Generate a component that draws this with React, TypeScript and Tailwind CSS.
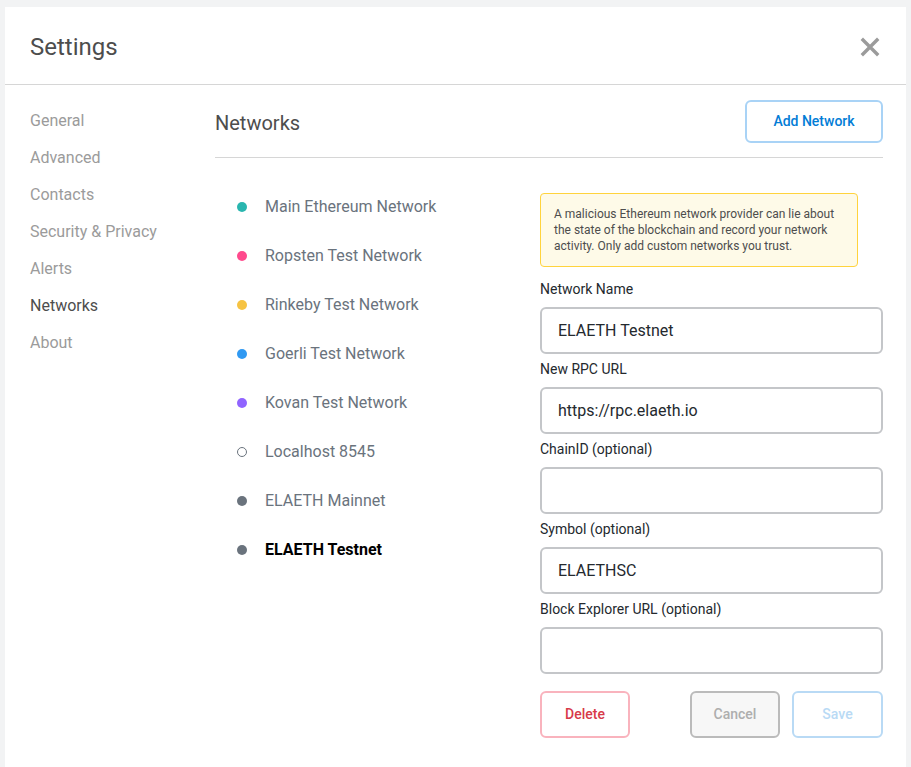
const networks = [
  { name: 'Main Ethereum Network', dot: 'bg-[#29b6af]' },
  { name: 'Ropsten Test Network', dot: 'bg-[#ff4a8d]' },
  { name: 'Rinkeby Test Network', dot: 'bg-[#f6c343]' },
  { name: 'Goerli Test Network', dot: 'bg-[#3099f2]' },
  { name: 'Kovan Test Network', dot: 'bg-[#9064ff]' },
  { name: 'Localhost 8545', dot: 'bg-white border border-[#6a737d]' },
  { name: 'ELAETH Mainnet', dot: 'bg-[#6a737d]' },
  { name: 'ELAETH Testnet', dot: 'bg-[#6a737d]', active: true },
];

const tabs = ['General', 'Advanced', 'Contacts', 'Security & Privacy', 'Alerts', 'Networks', 'About'];

const fields = [
  { label: 'Network Name', value: 'ELAETH Testnet' },
  { label: 'New RPC URL', value: 'https://rpc.elaeth.io' },
  { label: 'ChainID (optional)', value: '' },
  { label: 'Symbol (optional)', value: 'ELAETHSC' },
  { label: 'Block Explorer URL (optional)', value: '' },
];

export default function App() {
  return (
    <div
      className="min-h-screen bg-[#f2f3f4] px-[5px] pt-[7px]"
      style={{ fontFamily: 'Roboto, "Liberation Sans", sans-serif' }}
    >
      <div className="h-[760px] bg-white">
        {/* header */}
        <div className="flex h-[78px] items-center justify-between border-b border-[#d6d6d6] pl-[25px] pr-[25px]">
          <h1 className="mt-[2px] text-[24px] text-[#4d4d4d]">Settings</h1>
          <svg width="20" height="20" viewBox="0 0 20 20" className="mr-[1px] mt-[2px]">
            <path d="M3 3 L17 17 M17 3 L3 17" stroke="#9b9b9b" strokeWidth="3.4" strokeLinecap="square" />
          </svg>
        </div>

        <div className="flex">
          {/* sidebar */}
          <nav className="w-[210px] shrink-0 pl-[25px] pt-[17px]">
            {tabs.map((t) => (
              <div
                key={t}
                className={`h-[37px] text-[16px] leading-[37px] ${
                  t === 'Networks' ? 'text-[#4d4d4d]' : 'text-[#9b9b9b]'
                }`}
              >
                {t}
              </div>
            ))}
          </nav>

          {/* content */}
          <div className="flex-1 pr-[23px] pt-[15px]">
            <div className="flex items-center justify-between border-b border-[#d6d6d6] pb-[14px]">
              <h2 className="mt-[2px] text-[20px] text-[#4d4d4d]">Networks</h2>
              <button className="h-[43px] w-[138px] rounded-[6px] border-2 border-[#a9d3f6] text-[14px] font-medium text-[#037dd6]">
                Add Network
              </button>
            </div>

            <div className="flex">
              <ul className="w-[325px] shrink-0 pl-[22px] pt-[24px]">
                {networks.map((n) => (
                  <li key={n.name} className="flex h-[49px] items-center">
                    <span className={`h-[10px] w-[10px] rounded-full ${n.dot}`} />
                    <span
                      className={`ml-[18px] text-[16px] ${
                        n.active ? 'font-bold text-black' : 'text-[#6a737d]'
                      }`}
                    >
                      {n.name}
                    </span>
                  </li>
                ))}
              </ul>

              <div className="flex-1 pt-[35px]">
                <div className="w-[318px] rounded-[4px] border border-[#ffd33d] bg-[#fefae8] px-[13px] py-[12px] text-[12px] leading-[16px] text-[#4d4d4d]">
                  A malicious Ethereum network provider can lie about the state of the blockchain and record your
                  network activity. Only add custom networks you trust.
                </div>

                <div className="mt-[13px]">
                  {fields.map((f) => (
                    <div key={f.label} className="mb-[6px]">
                      <div className="mb-[9px] h-[18px] text-[14px] leading-[18px] text-[#24292e]">{f.label}</div>
                      <div className="flex h-[47px] items-center rounded-[6px] border-2 border-[#c4c6c9] px-[16px] text-[16px] text-[#24292e]">
                        {f.value}
                      </div>
                    </div>
                  ))}
                </div>

                <div className="mt-[17px] flex items-center">
                  <button className="h-[47px] w-[90px] rounded-[6px] border-2 border-[#f9b3bd] text-[14px] font-medium text-[#d73a49]">
                    Delete
                  </button>
                  <div className="flex-1" />
                  <button className="h-[47px] w-[90px] rounded-[6px] border-2 border-[#bbbbbb] bg-[#f7f7f7] text-[14px] font-medium text-[#aeaeae]">
                    Cancel
                  </button>
                  <button className="ml-[12px] h-[47px] w-[91px] rounded-[6px] border-2 border-[#b9daf5] text-[14px] font-medium text-[#b9daf5]">
                    Save
                  </button>
                </div>
              </div>
            </div>
          </div>
        </div>
      </div>
    </div>
  );
}
